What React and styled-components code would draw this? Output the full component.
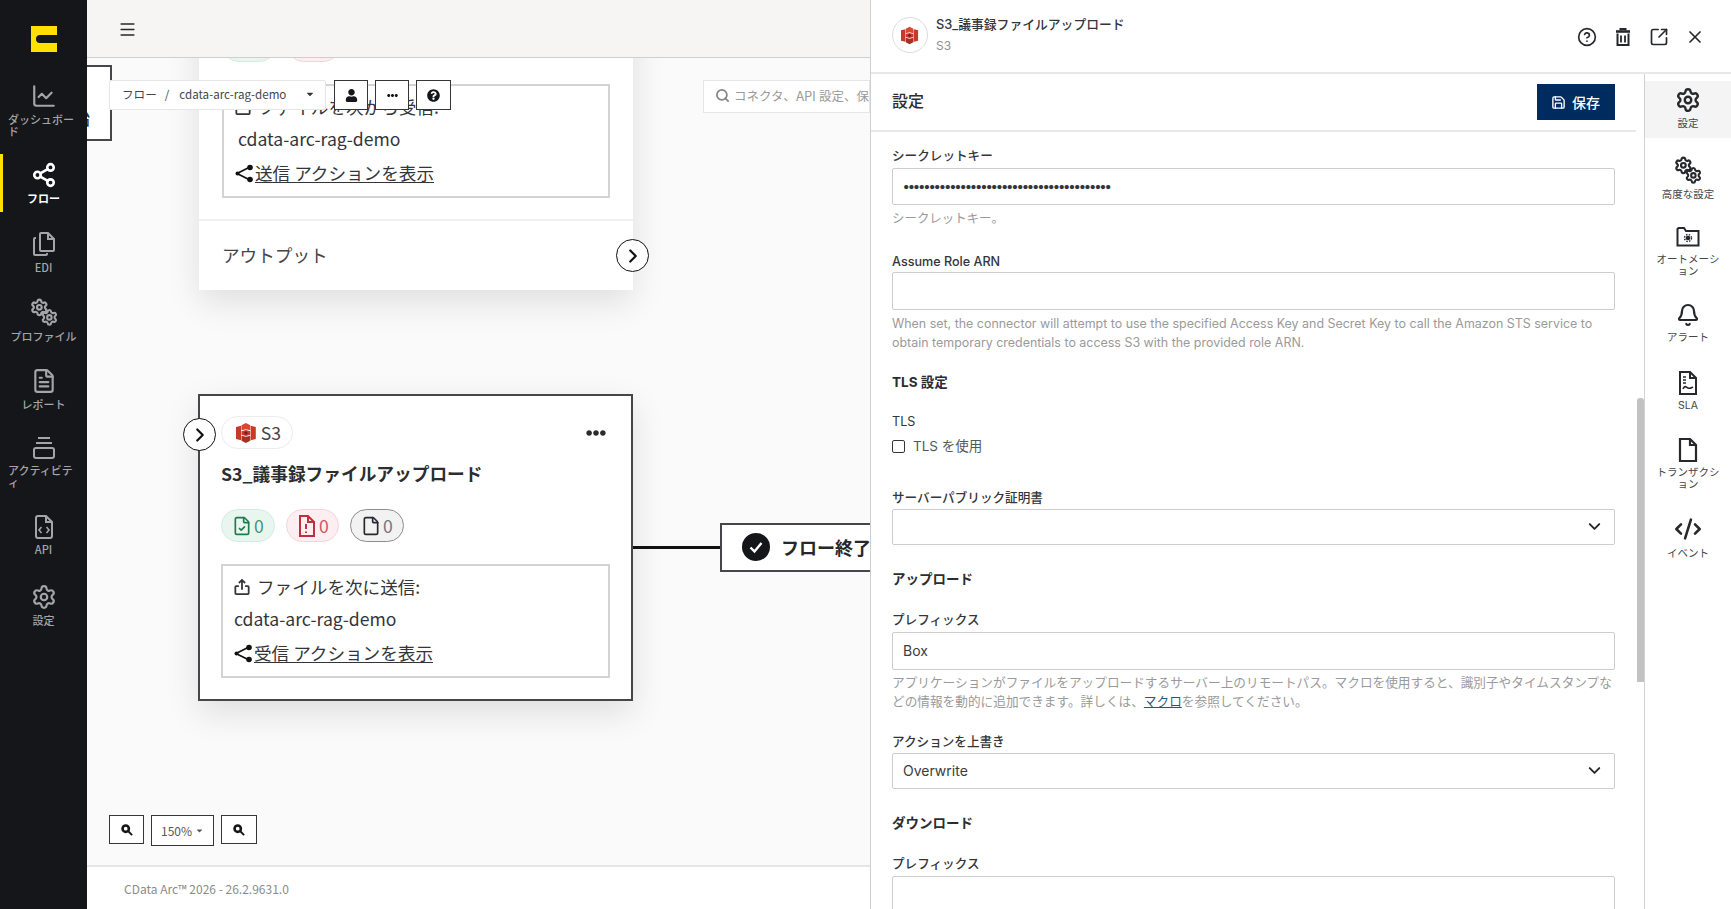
import React from 'react';
import styled, { createGlobalStyle } from 'styled-components';
import {
  ChartLine,
  ChevronDown,
  ChevronRight,
  CircleHelp,
  CodeXml,
  File,
  FileCheck,
  FileText,
  Bell,
  Menu,
  Save,
  Search,
  Settings,
  Share2,
  SquareArrowOutUpRight,
  X
} from 'lucide-react';
import { FaCaretDown, FaEllipsisH, FaQuestionCircle, FaUser } from 'react-icons/fa';

const CJK = '"Noto Sans CJK JP", "Noto Sans", sans-serif';
const PANEL_FONT = `Inter, ${CJK}`;

const GlobalStyle = createGlobalStyle`
  html, body { margin: 0; padding: 0; height: 100%; overflow: hidden; background: #fff; }
  * { box-sizing: border-box; }
  #root { height: 100%; }
`;

const Page = styled.div`
  position: relative;
  display: flex;
  width: 100%;
  height: 909px;
  overflow: hidden;
  font-family: ${CJK};
  color: #26282c;
`;

/* left navigation */
const Sidebar = styled.nav`
  flex: 0 0 87px;
  background: #14161a;
  display: flex;
  flex-direction: column;
`;

const LogoSlot = styled.div`
  height: 74px;
  padding: 26px 0 0 31px;
`;

const NavItem = styled.div`
  position: relative;
  height: ${p => p.$h}px;
  padding-top: ${p => p.$pt || 0}px;
  display: flex;
  flex-direction: column;
  align-items: center;
  color: ${p => (p.$active ? '#fff' : '#a4a5a7')};
  svg {
    flex: none;
  }
  &::before {
    content: '';
    display: ${p => (p.$active ? 'block' : 'none')};
    position: absolute;
    left: 0;
    top: 0;
    bottom: 0;
    width: 3px;
    background: #ffe000;
  }
`;

const NavLabel = styled.span`
  width: ${p => (p.$wrap ? '71px' : 'auto')};
  margin-top: 5px;
  font-size: 11px;
  line-height: 11.5px;
  font-weight: ${p => (p.$active ? 700 : 500)};
  word-break: break-all;
`;

/* main column */
const Main = styled.div`
  flex: 1;
  display: flex;
  flex-direction: column;
  min-width: 0;
`;

const TopBar = styled.header`
  flex: 0 0 58px;
  background: #f6f5f3;
  border-bottom: 1px solid #cfcfcf;
  padding: 20px 0 0 31px;
  color: #26282c;
`;

const Canvas = styled.div`
  position: relative;
  flex: 1;
  background: #fafafa;
  overflow: hidden;
`;

const Footer = styled.footer`
  flex: 0 0 44px;
  background: #fff;
  border-top: 2px solid #e6e6e6;
  padding: 13px 0 0 37px;
  font-size: 12px;
  line-height: 18px;
  color: #8b8b8b;
`;

/* diagram nodes: placed on the free canvas */
const CardBase = styled.section`
  position: absolute;
  background: #fff;
  box-shadow: 0 12px 32px rgba(0, 0, 0, 0.11);
  font-size: 17.6px;
  line-height: 26px;
`;

const UpperCard = styled(CardBase)`
  left: 112px;
  top: -144px;
  width: 434px;
  height: 376px;
`;

const LowerCard = styled(CardBase)`
  left: 111px;
  top: 336px;
  width: 435px;
  height: 307px;
  border: 2px solid #44464a;
`;

const CardBody = styled.div`
  padding: ${p => (p.$bordered ? '20px 21px 0 21px' : '22px 23px 0 23px')};
`;

const ChipRow = styled.div`
  display: flex;
  justify-content: space-between;
  align-items: center;
  height: 33px;
  padding-right: 4px;
  color: #2b2b2b;
`;

const TypeChip = styled.div`
  display: flex;
  align-items: center;
  gap: 5px;
  height: 33px;
  padding: 0 11px 0 14px;
  border: 1px solid #ececec;
  border-radius: 17px;
  color: #44464a;
`;

const CardTitle = styled.h3`
  margin: 11px 0 0;
  font-size: 17.7px;
  line-height: 26px;
  font-weight: 700;
  color: #2b2d30;
`;

const Stats = styled.div`
  display: flex;
  gap: 11px;
  margin-top: 23px;
`;

const statColours = {
  ok: { bg: '#e9f6ef', line: '#d3ecdd', ink: '#1c7c4d' },
  bad: { bg: '#fdeff1', line: '#f5d3d8', ink: '#c02f3c' },
  all: { bg: '#f2f2f3', line: '#8c8d90', ink: '#27292e' }
};

const StatPill = styled.div`
  display: flex;
  align-items: center;
  gap: 2px;
  width: ${p => (p.$kind === 'bad' ? 53 : 54)}px;
  height: 33px;
  padding-left: 10px;
  border: 1px solid ${p => statColours[p.$kind].line};
  border-radius: 17px;
  background: ${p => statColours[p.$kind].bg};
  color: ${p => statColours[p.$kind].ink};
  span {
    font-weight: 400;
    color: ${p => (p.$kind === 'all' ? '#55575b' : statColours[p.$kind].ink)};
    opacity: 0.8;
  }
`;

const PortBox = styled.div`
  height: 114px;
  margin-top: 22px;
  padding: 8px 11px 0;
  border: 2px solid #d4d4d4;
  color: #33353a;
`;

const PortLine = styled.div`
  display: flex;
  align-items: center;
  gap: ${p => p.$gap || 0}px;
  height: 26px;
  margin-top: ${p => p.$mt || 0}px;
  padding-left: ${p => p.$indent || 0}px;
  white-space: nowrap;
`;

const PortLink = styled.a`
  margin-left: 1px;
  color: #33353a;
  text-decoration: underline;
  text-underline-offset: 2px;
`;

const CardDivider = styled.div`
  height: 2px;
  margin-top: 21px;
  background: #f0f0f0;
`;

const OutputRow = styled.div`
  padding: 21px 23px 0;
  font-size: 17.6px;
  color: #44464a;
`;

const RoundToggle = styled.div`
  position: absolute;
  display: flex;
  align-items: center;
  justify-content: center;
  width: 33px;
  height: 33px;
  border: 1.5px solid #111;
  border-radius: 50%;
  background: #fff;
  color: #111;
`;

const OutputToggle = styled(RoundToggle)`
  left: 417px;
  top: 325px;
`;

const InputToggle = styled(RoundToggle)`
  left: -17px;
  top: 22px;
`;

const CutOffNode = styled.div`
  position: absolute;
  left: -110px;
  top: 7px;
  width: 135px;
  height: 76px;
  padding: 38px 20px 0 0;
  border: 2px solid #44464a;
  background: #fff;
  font-size: 18px;
  line-height: 24px;
  text-align: right;
`;

const Connector = styled.div`
  position: absolute;
  left: 546px;
  top: 488px;
  width: 88px;
  height: 3px;
  background: #111;
`;

const EndNode = styled.div`
  position: absolute;
  left: 633px;
  top: 465px;
  display: flex;
  align-items: center;
  gap: 11px;
  width: 260px;
  height: 49px;
  padding: 0 0 2px 20px;
  border: 2px solid #44464a;
  background: #fff;
  font-size: 18px;
  font-weight: 700;
`;

const CheckDisc = styled.span`
  display: flex;
  align-items: center;
  justify-content: center;
  width: 28px;
  height: 28px;
  border-radius: 50%;
  background: #14161a;
`;

/* things floating over the canvas */
const Breadcrumb = styled.div`
  position: absolute;
  left: 22px;
  top: 22px;
  display: flex;
  align-items: center;
  gap: 8px;
  width: 217px;
  height: 30px;
  padding: 0 10px 2px 12px;
  border: 1px solid #e6e6e6;
  border-radius: 2px;
  background: #fff;
  font-size: 11.6px;
  color: #44464a;
  white-space: nowrap;
`;

const Slash = styled.span`
  margin-right: 2px;
`;

const Caret = styled.span`
  margin-left: auto;
  display: flex;
  color: #33353a;
`;

const FlowActions = styled.div`
  position: absolute;
  left: 247px;
  top: 22px;
  display: flex;
  gap: 7px;
`;

const SquareButton = styled.div`
  display: flex;
  align-items: center;
  justify-content: center;
  width: ${p => p.$w || 34}px;
  height: ${p => p.$h || 30}px;
  border: 1.5px solid #34363a;
  background: #fff;
  color: #14161a;
  font-size: 12px;
`;

const SearchBox = styled.div`
  position: absolute;
  left: 616px;
  top: 22px;
  display: flex;
  align-items: center;
  gap: 4px;
  width: 167px;
  height: 33px;
  padding: 0 0 2px 11px;
  border: 1px solid #e6e6e6;
  background: #fff;
  font-family: ${PANEL_FONT};
  font-size: 12.5px;
  color: #9a9a9a;
  white-space: nowrap;
  overflow: hidden;
  svg {
    flex: none;
    color: #85878a;
  }
`;

const ZoomBar = styled.div`
  position: absolute;
  left: 22px;
  top: 757px;
  display: flex;
  gap: 7px;
`;

const ZoomSelect = styled(SquareButton)`
  gap: 3px;
  color: #55575b;
`;

/* settings drawer that lies over the page */
const Drawer = styled.aside`
  position: absolute;
  top: 0;
  right: 0;
  bottom: 0;
  width: 861px;
  display: flex;
  flex-direction: column;
  background: #fff;
  border-left: 1px solid #cfcfcf;
  font-family: ${PANEL_FONT};
`;

const DrawerHead = styled.header`
  flex: 0 0 74px;
  display: flex;
  align-items: center;
  gap: 8px;
  padding: 0 26px 2px 21px;
  border-bottom: 2px solid #e8e8e8;
`;

const LogoDisc = styled.div`
  display: flex;
  align-items: center;
  justify-content: center;
  width: 36px;
  height: 36px;
  border: 1px solid #dcdcdc;
  border-radius: 50%;
`;

const HeadText = styled.div`
  flex: 1;
  font-size: 12.8px;
  line-height: 18px;
  font-weight: 500;
  color: #33353a;
  small {
    display: block;
    margin-top: 3px;
    font-size: 12px;
    font-weight: 400;
    color: #8f8f8f;
  }
`;

const HeadTools = styled.div`
  display: flex;
  gap: 16px;
  margin-top: 3px;
  color: #26282c;
`;

const DrawerBody = styled.div`
  flex: 1;
  display: flex;
  min-height: 0;
`;

const Form = styled.div`
  position: relative;
  flex: 1;
  display: flex;
  flex-direction: column;
  min-width: 0;
`;

const FormHead = styled.div`
  flex: 0 0 58px;
  display: flex;
  align-items: center;
  justify-content: space-between;
  margin-right: 8px;
  padding: 0 21px 0 21px;
  border-bottom: 2px solid #e8e8e8;
  font-family: ${CJK};
  font-size: 16px;
  font-weight: 500;
  color: #2b2d30;
`;

const FormTitle = styled.span`
  margin-top: -4px;
`;

const SaveButton = styled.div`
  display: flex;
  align-items: center;
  gap: 6px;
  width: 78px;
  height: 36px;
  padding-left: 14px;
  background: #002b5f;
  color: #fff;
  font-size: 14px;
  font-weight: 500;
`;

const Scroller = styled.div`
  flex: 1;
  overflow: hidden;
  padding: 15px 29px 0 21px;
`;

const Label = styled.div`
  margin-top: ${p => p.$mt || 0}px;
  margin-bottom: ${p => (p.$mb === undefined ? 3 : p.$mb)}px;
  font-size: 12.6px;
  line-height: 18px;
  font-weight: 500;
  color: #33353a;
`;

const PlainLabel = styled(Label)`
  font-weight: 400;
`;

const Field = styled.div`
  display: flex;
  align-items: center;
  justify-content: space-between;
  height: ${p => p.$h || 37}px;
  padding: 0 10px 2px;
  border: 1px solid #cdcdcd;
  border-radius: 2px;
  background: #fff;
  font-size: 14px;
  color: #3a3c40;
`;

const SecretDots = styled.span`
  font-size: 13.5px;
  font-weight: 700;
  letter-spacing: -1.22px;
  color: #33353a;
`;

const Help = styled.p`
  margin: ${p => (p.$cjk ? 3 : 4)}px 0 0;
  font-size: ${p => (p.$cjk ? '12.66px' : '12.45px')};
  line-height: 19px;
  color: #9a9a9a;
  a {
    color: #1f5c7a;
    text-decoration: underline;
  }
`;

const SectionTitle = styled.h4`
  margin: ${p => p.$mt}px 0 0;
  font-size: 13.5px;
  line-height: 20px;
  font-weight: 700;
  color: #2b2d30;
`;

const CheckRow = styled.div`
  display: flex;
  align-items: center;
  gap: 8px;
  margin-top: 5px;
  font-size: 13.5px;
  line-height: 20px;
  color: #55575b;
`;

const CheckBox = styled.span`
  width: 13px;
  height: 13px;
  border: 1.5px solid #34363a;
  border-radius: 2px;
`;

const ScrollThumb = styled.div`
  position: absolute;
  right: 0;
  top: 324px;
  width: 7px;
  height: 284px;
  border-radius: 3px 3px 0 0;
  background: #c2c2c2;
`;

const Rail = styled.nav`
  flex: 0 0 87px;
  display: flex;
  flex-direction: column;
  padding-top: 7px;
  border-left: 1px solid #d2d2d2;
`;

const RailItem = styled.div`
  height: ${p => p.$h}px;
  padding-top: ${p => p.$pt}px;
  display: flex;
  flex-direction: column;
  align-items: center;
  text-align: center;
  background: ${p => (p.$active ? '#f4f4f4' : 'transparent')};
  color: #26282c;
  svg {
    flex: none;
  }
  span {
    flex: none;
    width: 70px;
    margin-top: 5px;
    font-size: 10.5px;
    line-height: 11.5px;
    color: #44464a;
    word-break: break-all;
  }
`;

const S3Logo = ({ size = 20 }) => (
  <svg width={size * 0.9} height={size} viewBox="0 0 18 20" aria-hidden="true">
    <path d="M0 4.500 4.600 3.500v13L0 15.500z" fill="#c7392b" />
    <path d="M18 4.500l-4.600-1v13l4.600-1z" fill="#c7392b" />
    <path d="M5 3 9 .8 13 3v4.500L9 6.500 5 7.500z" fill="#d9482f" />
    <path d="M5 12.500 9 13.500l4-1V17l-4 2.200L5 17z" fill="#a9301f" />
    <path d="M5 8.300 9 7.300l4 1v3.400l-4 1-4-1z" fill="#c7392b" />
    <circle cx="9" cy="10" r="1.400" fill="#6f1f14" />
  </svg>
);

const CLogo = () => (
  <svg width="26" height="26" viewBox="0 0 26 26" aria-hidden="true">
    <path d="M0 0h26v9H9a4 4 0 0 0-4 4 4 4 0 0 0 4 4h17v9H0z" fill="#ffe000" />
  </svg>
);

const TwoGears = ({ size = 28 }) => (
  <svg width={size} height={size} viewBox="0 0 28 28" aria-hidden="true">
    <g transform="scale(0.78)">
      <Settings size={24} strokeWidth={2.8} />
    </g>
    <g transform="translate(10.500 10.500) scale(0.74)">
      <Settings size={24} strokeWidth={2.8} />
    </g>
  </svg>
);

const Copies = () => (
  <svg width="24" height="26" viewBox="0 0 24 26" fill="none" stroke="currentColor" strokeWidth="2" aria-hidden="true">
    <path d="M9 2h7l6 6v11a1 1 0 0 1-1 1H9a1 1 0 0 1-1-1V3a1 1 0 0 1 1-1z" />
    <path d="M16 2v6h6" />
    <path d="M4 7H3a1 1 0 0 0-1 1v15a1 1 0 0 0 1 1h11a1 1 0 0 0 1-1v-1" />
  </svg>
);

const Stack = () => (
  <svg width="24" height="24" viewBox="0 0 24 24" fill="none" stroke="currentColor" strokeWidth="2" aria-hidden="true">
    <path d="M6 2h12" />
    <path d="M4 7h16" />
    <rect x="2" y="12" width="20" height="10" rx="2" />
  </svg>
);

const ApiFile = () => (
  <svg width="22" height="24" viewBox="0 0 22 24" fill="none" stroke="currentColor" strokeWidth="2" aria-hidden="true">
    <path d="M5 1h8l6 6v14a2 2 0 0 1-2 2H5a2 2 0 0 1-2-2V3a2 2 0 0 1 2-2z" />
    <path d="M13 1v6h6" />
    <path d="M8.500 12 6 15l2.500 3M13.500 12l2.500 3-2.500 3" strokeWidth="1.600" />
  </svg>
);

const FolderGear = () => (
  <svg width="24" height="24" viewBox="0 0 24 22" fill="none" stroke="currentColor" strokeWidth="2" aria-hidden="true">
    <path d="M1.500 3v16.500h21V5H10L8 2H2.500z" />
    <circle cx="12" cy="12" r="2.300" fill="currentColor" stroke="none" />
    <circle cx="12" cy="12" r="3.500" strokeWidth="1.400" strokeDasharray="1.500 1.300" />
  </svg>
);

const SlaFile = () => (
  <svg width="20" height="24" viewBox="0 0 20 24" fill="none" stroke="currentColor" strokeWidth="2" aria-hidden="true">
    <path d="M2 1h10l6 6v16H2z" />
    <path d="M12 1v6h6" />
    <path d="M5 6h3M5 9h3M5 12h3" strokeWidth="1.500" />
    <path d="M5 18c2-4 3-2 5-1s3 0 5-1" strokeWidth="1.600" />
  </svg>
);

const PlainFile = () => (
  <svg width="20" height="24" viewBox="0 0 20 24" fill="none" stroke="currentColor" strokeWidth="2.200" aria-hidden="true">
    <path d="M2 1h10l6 6v16H2z" />
    <path d="M12 1v6h6" />
  </svg>
);

const NodeShare = () => (
  <svg width="19" height="19" viewBox="0 0 19 19" fill="none" stroke="#111" strokeWidth="1.800" aria-hidden="true">
    <path d="M2 9.500 14 3.500M2 9.500 14 15.500" />
    <circle cx="2.500" cy="9.500" r="2" fill="#111" stroke="none" />
    <circle cx="15" cy="3.500" r="2.800" fill="#111" stroke="none" />
    <circle cx="15" cy="15.500" r="2.800" fill="#111" stroke="none" />
  </svg>
);

const TrayUp = () => (
  <svg width="16" height="18" viewBox="0 0 18 20" fill="none" stroke="currentColor" strokeWidth="2" aria-hidden="true">
    <path d="M9 13V2M5.500 5.500 9 2l3.500 3.500" />
    <path d="M5.500 9H2.500a1 1 0 0 0-1 1v7a1 1 0 0 0 1 1h13a1 1 0 0 0 1-1v-7a1 1 0 0 0-1-1h-3" />
  </svg>
);

const BadFile = () => (
  <svg width="20" height="22" viewBox="0 0 20 22" fill="none" stroke="currentColor" strokeWidth="2" aria-hidden="true">
    <path d="M3 1h8l6 6v14H3z" />
    <path d="M11 1v6h6" />
    <path d="M9 9v5M9 16.500v1.500" />
  </svg>
);

const BinIcon = () => (
  <svg width="20" height="20" viewBox="0 0 20 20" fill="none" stroke="currentColor" strokeWidth="2" aria-hidden="true">
    <path d="M3 4.500h14" strokeWidth="2.600" />
    <path d="M7.500 3.500v-1.500h5v1.500" />
    <path d="M4.500 6.500V18h11V6.500" />
    <path d="M8 8.500v7M12 8.500v7" strokeWidth="1.800" />
  </svg>
);

const ZoomGlass = () => (
  <svg width="12" height="12" viewBox="0 0 14 14" fill="none" stroke="#14161a" aria-hidden="true">
    <circle cx="5.500" cy="5.500" r="3.700" strokeWidth="3" />
    <path d="M8.500 8.500 13 13" strokeWidth="2.200" />
  </svg>
);

const CardTail = ({ heading, linkText, indent }) => (
  <PortBox>
    <PortLine $gap={7}>
      <TrayUp />
      {heading}
    </PortLine>
    <PortLine $mt={6} $indent={indent}>cdata-arc-rag-demo</PortLine>
    <PortLine $mt={8}>
      <NodeShare />
      <PortLink>{linkText}</PortLink>
    </PortLine>
  </PortBox>
);

const CardHeading = ({ more }) => (
  <>
    <ChipRow>
      <TypeChip>
        <S3Logo size={22} />
        S3
      </TypeChip>
      {more && <FaEllipsisH size={20} />}
    </ChipRow>
    <CardTitle>S3_議事録ファイルアップロード</CardTitle>
    <Stats>
      <StatPill $kind="ok">
        <FileCheck size={20} strokeWidth={2} />
        <span>0</span>
      </StatPill>
      <StatPill $kind="bad">
        <BadFile />
        <span>0</span>
      </StatPill>
      {more && (
        <StatPill $kind="all">
          <File size={20} strokeWidth={2} />
          <span>0</span>
        </StatPill>
      )}
    </Stats>
  </>
);

const sideNav = [
  { label: 'ダッシュボード', h: 80, pt: 9, wrap: true, icon: <ChartLine size={26} strokeWidth={2} /> },
  { label: 'フロー', h: 58, pt: 8, active: true, icon: <Share2 size={26} strokeWidth={2.4} /> },
  { label: 'EDI', h: 68, pt: 19, icon: <Copies /> },
  { label: 'プロファイル', h: 68, pt: 18, icon: <TwoGears /> },
  { label: 'レポート', h: 68, pt: 20, icon: <FileText size={26} strokeWidth={2} /> },
  { label: 'アクティビティ', h: 78, pt: 20, wrap: true, icon: <Stack /> },
  { label: 'API', h: 68, pt: 21, icon: <ApiFile /> },
  { label: '設定', h: 60, pt: 22, icon: <Settings size={26} strokeWidth={2} /> }
];

const railNav = [
  { label: '設定', h: 57, pt: 6, active: true, icon: <Settings size={26} strokeWidth={2.2} /> },
  { label: '高度な設定', h: 71, pt: 18, icon: <TwoGears /> },
  { label: 'オートメーション', h: 73, pt: 16, icon: <FolderGear /> },
  { label: 'アラート', h: 65, pt: 21, icon: <Bell size={24} strokeWidth={2.2} /> },
  { label: 'SLA', h: 67, pt: 24, icon: <SlaFile /> },
  { label: 'トランザクション', h: 77, pt: 24, icon: <PlainFile /> },
  { label: 'イベント', h: 70, pt: 24, icon: <CodeXml size={28} strokeWidth={2.2} /> }
];

export default function App() {
  return (
    <Page>
      <GlobalStyle />
      <Sidebar>
        <LogoSlot>
          <CLogo />
        </LogoSlot>
        {sideNav.map(item => (
          <NavItem key={item.label} $h={item.h} $pt={item.pt} $active={item.active}>
            {item.icon}
            <NavLabel $wrap={item.wrap} $active={item.active}>{item.label}</NavLabel>
          </NavItem>
        ))}
      </Sidebar>

      <Main>
        <TopBar>
          <Menu size={19} />
        </TopBar>
        <Canvas>
          <CutOffNode>開始</CutOffNode>

          <UpperCard>
            <CardBody>
              <CardHeading />
              <CardTail heading="ファイルを次から受信:" linkText="送信 アクションを表示" indent={3} />
            </CardBody>
            <CardDivider />
            <OutputRow>アウトプット</OutputRow>
            <OutputToggle>
              <ChevronRight size={22} strokeWidth={2.4} />
            </OutputToggle>
          </UpperCard>

          <LowerCard>
            <InputToggle>
              <ChevronRight size={22} strokeWidth={2.4} />
            </InputToggle>
            <CardBody $bordered>
              <CardHeading more />
              <CardTail heading="ファイルを次に送信:" linkText="受信 アクションを表示" />
            </CardBody>
          </LowerCard>

          <Connector />
          <EndNode>
            <CheckDisc>
              <svg width="16" height="16" viewBox="0 0 16 16" fill="none" stroke="#fff" strokeWidth="2.400" aria-hidden="true">
                <path d="M2.500 8.500 6.500 12.500 13.500 4" />
              </svg>
            </CheckDisc>
            フロー終了
          </EndNode>

          <Breadcrumb>
            <span>フロー</span>
            <Slash>/</Slash>
            <span>cdata-arc-rag-demo</span>
            <Caret>
              <FaCaretDown size={10} />
            </Caret>
          </Breadcrumb>
          <FlowActions>
            <SquareButton>
              <FaUser size={13} />
            </SquareButton>
            <SquareButton>
              <FaEllipsisH size={11} />
            </SquareButton>
            <SquareButton $w={35}>
              <FaQuestionCircle size={13} />
            </SquareButton>
          </FlowActions>
          <SearchBox>
            <Search size={15} strokeWidth={2.8} />
            コネクタ、API 設定、保存されたフローを検索
          </SearchBox>

          <ZoomBar>
            <SquareButton $w={35} $h={29}>
              <ZoomGlass />
            </SquareButton>
            <ZoomSelect $w={63} $h={31}>
              150%
              <FaCaretDown size={9} />
            </ZoomSelect>
            <SquareButton $w={36} $h={29}>
              <ZoomGlass />
            </SquareButton>
          </ZoomBar>
        </Canvas>
        <Footer>CData Arc™ 2026 - 26.2.9631.0</Footer>
      </Main>

      <Drawer>
        <DrawerHead>
          <LogoDisc>
            <S3Logo size={19} />
          </LogoDisc>
          <HeadText>
            S3_議事録ファイルアップロード
            <small>S3</small>
          </HeadText>
          <HeadTools>
            <CircleHelp size={20} strokeWidth={2} />
            <BinIcon />
            <SquareArrowOutUpRight size={20} strokeWidth={2} />
            <X size={20} strokeWidth={2} />
          </HeadTools>
        </DrawerHead>
        <DrawerBody>
          <Form>
            <FormHead>
              <FormTitle>設定</FormTitle>
              <SaveButton>
                <Save size={15} strokeWidth={2.200} />
                保存
              </SaveButton>
            </FormHead>
            <Scroller>
              <Label>シークレットキー</Label>
              <Field>
                <SecretDots>••••••••••••••••••••••••••••••••••••••••</SecretDots>
              </Field>
              <Help>シークレットキー。</Help>

              <Label $mt={25} $mb={1}>Assume Role ARN</Label>
              <Field $h={38} />
              <Help>
                When set, the connector will attempt to use the specified Access Key and Secret Key to call the Amazon STS service to obtain temporary credentials to access S3 with the provided role ARN.
              </Help>

              <SectionTitle $mt={20}>TLS 設定</SectionTitle>
              <PlainLabel $mt={21} $mb={0}>TLS</PlainLabel>
              <CheckRow>
                <CheckBox />
                TLS を使用
              </CheckRow>

              <Label $mt={33} $mb={2}>サーバーパブリック証明書</Label>
              <Field $h={36}>
                <span />
                <ChevronDown size={19} strokeWidth={2.400} color="#26282c" />
              </Field>

              <SectionTitle $mt={24}>アップロード</SectionTitle>
              <Label $mt={22}>プレフィックス</Label>
              <Field $h={38}>Box</Field>
              <Help $cjk>
                アプリケーションがファイルをアップロードするサーバー上のリモートパス。マクロを使用すると、識別子やタイムスタンプなどの情報を動的に追加できます。詳しくは、<a>マクロ</a>を参照してください。
              </Help>

              <Label $mt={22} $mb={2}>アクションを上書き</Label>
              <Field $h={36}>
                Overwrite
                <ChevronDown size={19} strokeWidth={2.400} color="#26282c" />
              </Field>

              <SectionTitle $mt={24}>ダウンロード</SectionTitle>
              <Label $mt={22}>プレフィックス</Label>
              <Field $h={38} />
            </Scroller>
            <ScrollThumb />
          </Form>
          <Rail>
            {railNav.map(item => (
              <RailItem key={item.label} $h={item.h} $pt={item.pt} $active={item.active}>
                {item.icon}
                <span>{item.label}</span>
              </RailItem>
            ))}
          </Rail>
        </DrawerBody>
      </Drawer>
    </Page>
  );
}
